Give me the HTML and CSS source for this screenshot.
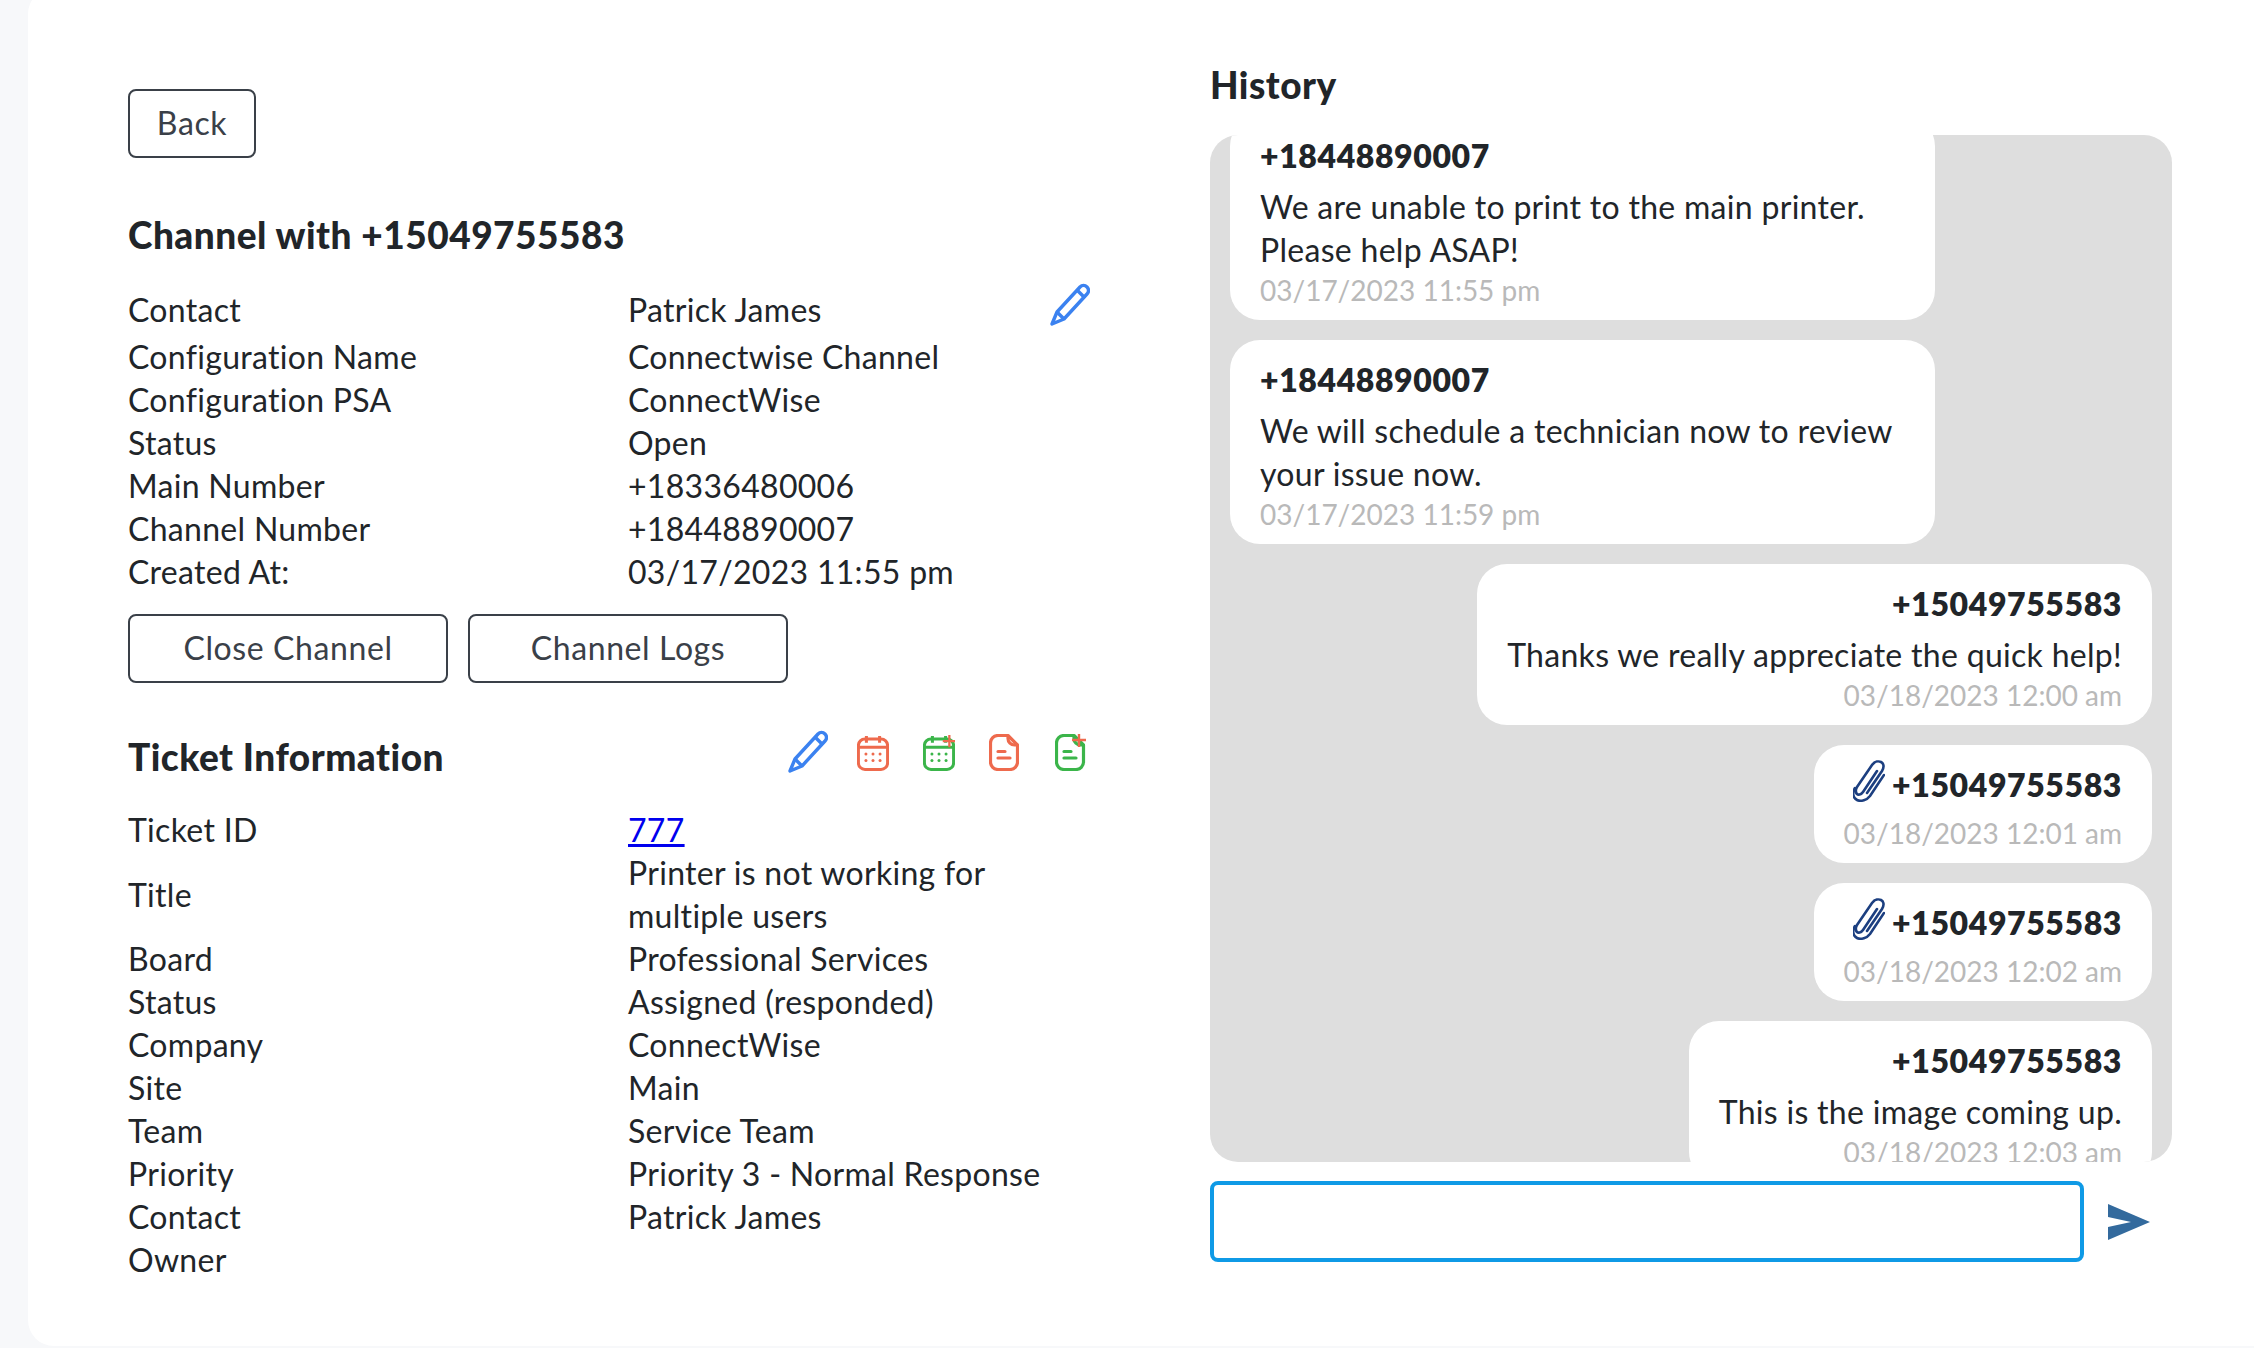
FILE: index.html
```html
<!DOCTYPE html>
<html lang="en">
<head>
<meta charset="utf-8">
<title>Channel</title>
<link rel="stylesheet" href="styles.css">
</head>
<body>
<main class="card">
  <section class="left">
    <button class="btn btn-back">Back</button>
    <h2 class="title channel-title">Channel with +15049755583</h2>
    <div class="rows">
      <div class="row row-contact"><span>Contact</span><span class="value-with-icon"><span>Patrick James</span>
        <svg class="ic-pencil" viewBox="0 0 40 44"><g fill="none" stroke="#3b82f0" stroke-width="3.400" stroke-linejoin="round"><path d="M7 29 30 4c2-2 5-2 7 0s2 5 0 7L14 36 2 41z"/><path d="M27 7l8 8M7 29l7 7"/></g></svg>
      </span></div>
      <div class="row"><span>Configuration Name</span><span>Connectwise Channel</span></div>
      <div class="row"><span>Configuration PSA</span><span>ConnectWise</span></div>
      <div class="row"><span>Status</span><span>Open</span></div>
      <div class="row"><span>Main Number</span><span>+18336480006</span></div>
      <div class="row"><span>Channel Number</span><span>+18448890007</span></div>
      <div class="row"><span>Created At:</span><span>03/17/2023 11:55 pm</span></div>
    </div>
    <div class="actions">
      <button class="btn btn-wide">Close Channel</button>
      <button class="btn btn-wide">Channel Logs</button>
    </div>
    <div class="ticket-head">
      <h2 class="title">Ticket Information</h2>
      <div class="icons">
        <svg class="ic-pencil" viewBox="0 0 40 44"><g fill="none" stroke="#3b82f0" stroke-width="3.400" stroke-linejoin="round"><path d="M7 29 30 4c2-2 5-2 7 0s2 5 0 7L14 36 2 41z"/><path d="M27 7l8 8M7 29l7 7"/></g></svg>
        <svg class="ic-cal" viewBox="0 0 34 38"><g fill="none" stroke="#ee6a4d" stroke-width="3.200"><rect x="1.500" y="4" width="31" height="32.500" rx="7"/><path d="M1.500 13h31M10 1v7M24 1v7"/></g><g fill="#ee6a4d"><circle cx="9.500" cy="20" r="1.600"/><circle cx="17" cy="20" r="1.600"/><circle cx="24.500" cy="20" r="1.600"/><circle cx="9.500" cy="27" r="1.600"/><circle cx="17" cy="27" r="1.600"/><circle cx="24.500" cy="27" r="1.600"/></g></svg>
        <svg class="ic-cal" viewBox="0 0 34 38"><g fill="none" stroke="#3bb54a" stroke-width="3.200"><rect x="1.500" y="4" width="31" height="32.500" rx="7"/><path d="M1.500 13h31M10 1v7M24 1v7"/></g><g fill="#3bb54a"><circle cx="9.500" cy="20" r="1.600"/><circle cx="17" cy="20" r="1.600"/><circle cx="24.500" cy="20" r="1.600"/><circle cx="9.500" cy="27" r="1.600"/><circle cx="17" cy="27" r="1.600"/><circle cx="24.500" cy="27" r="1.600"/></g><path d="M28 0v13M21 6.500h13" stroke="#ee6a4d" stroke-width="2.400"/></svg>
        <svg class="ic-doc" viewBox="0 0 30 37"><g fill="none" stroke="#ee6a4d" stroke-width="3.200" stroke-linejoin="round"><path d="M19 1.500H9a7.500 7.500 0 0 0-7.500 7.500v19A7.500 7.500 0 0 0 9 35.500h12a7.500 7.500 0 0 0 7.500-7.500V11z"/><path d="M19 1.500v3a6.500 6.500 0 0 0 6.500 6.500h3"/><path d="M9 17.500h7M9 24h12" stroke-linecap="round"/></g></svg>
        <svg class="ic-doc-plus" viewBox="0 0 32 37"><g fill="none" stroke="#3bb54a" stroke-width="3.200" stroke-linejoin="round"><path d="M19 1.500H9a7.500 7.500 0 0 0-7.500 7.500v19A7.500 7.500 0 0 0 9 35.500h12a7.500 7.500 0 0 0 7.500-7.500V11z"/><path d="M19 1.500v3a6.500 6.500 0 0 0 6.500 6.500h3"/><path d="M9 17.500h7M9 24h12" stroke-linecap="round"/></g><path d="M24 0v13M17 6h14" stroke="#ee6a4d" stroke-width="2.400" fill="none"/></svg>
      </div>
    </div>
    <div class="rows">
      <div class="row"><span>Ticket ID</span><span><a class="link" href="#">777</a></span></div>
      <div class="row"><span>Title</span><span>Printer is not working for multiple users</span></div>
      <div class="row"><span>Board</span><span>Professional Services</span></div>
      <div class="row"><span>Status</span><span>Assigned (responded)</span></div>
      <div class="row"><span>Company</span><span>ConnectWise</span></div>
      <div class="row"><span>Site</span><span>Main</span></div>
      <div class="row"><span>Team</span><span>Service Team</span></div>
      <div class="row"><span>Priority</span><span>Priority 3 - Normal Response</span></div>
      <div class="row"><span>Contact</span><span>Patrick James</span></div>
      <div class="row"><span>Owner</span><span></span></div>
    </div>
  </section>
  <section class="right">
    <h2 class="title history-title">History</h2>
    <div class="chat">
      <article class="bubble first">
        <div class="name">+18448890007</div>
        <p class="msg">We are unable to print to the main printer. Please help ASAP!</p>
        <div class="date">03/17/2023 11:55 pm</div>
      </article>
      <article class="bubble">
        <div class="name">+18448890007</div>
        <p class="msg">We will schedule a technician now to review your issue now.</p>
        <div class="date">03/17/2023 11:59 pm</div>
      </article>
      <article class="bubble mine">
        <div class="name">+15049755583</div>
        <p class="msg">Thanks we really appreciate the quick help!</p>
        <div class="date">03/18/2023 12:00 am</div>
      </article>
      <article class="bubble mine">
        <div class="name"><svg class="clip" viewBox="0 0 32 42"><path d="M24 11 10 32c-2 3-5 3-6 2s-2-4 0-7L19 5c3-4 7-4 9-3s4 4 1 9L14 33" fill="none" stroke="#1c3f80" stroke-width="2.600" stroke-linecap="round"/><path d="M31 15 17 36c-3 4-9 6-13 4s-5-7-2-12" fill="none" stroke="#1c3f80" stroke-width="2.600" stroke-linecap="round"/></svg>+15049755583</div>
        <div class="date">03/18/2023 12:01 am</div>
      </article>
      <article class="bubble mine">
        <div class="name"><svg class="clip" viewBox="0 0 32 42"><path d="M24 11 10 32c-2 3-5 3-6 2s-2-4 0-7L19 5c3-4 7-4 9-3s4 4 1 9L14 33" fill="none" stroke="#1c3f80" stroke-width="2.600" stroke-linecap="round"/><path d="M31 15 17 36c-3 4-9 6-13 4s-5-7-2-12" fill="none" stroke="#1c3f80" stroke-width="2.600" stroke-linecap="round"/></svg>+15049755583</div>
        <div class="date">03/18/2023 12:02 am</div>
      </article>
      <article class="bubble mine">
        <div class="name">+15049755583</div>
        <p class="msg">This is the image coming up.</p>
        <div class="date">03/18/2023 12:03 am</div>
      </article>
    </div>
    <div class="composer">
      <div class="input"></div>
      <svg class="send" viewBox="0 0 42 36"><path d="M0 0 42 18 0 36V23l23-5L0 13z" fill="#336a9d"/></svg>
    </div>
  </section>
</main>
</body>
</html>
```
FILE: styles.css
```css
* { box-sizing: border-box; }
html, body { margin: 0; height: 100%; overflow: hidden; }
body {
  background: #f7f8fa;
  color: #212529;
  font-family: "Lato", "Liberation Sans", sans-serif;
  font-size: 32px;
  letter-spacing: 0.3px;
  line-height: 43px;
}
.card {
  margin: -12px 0 0 28px;
  height: 1358px;
  background: #fff;
  border-radius: 26px 0 0 26px;
  padding: 72px 82px 0 100px;
  display: flex;
  gap: 120px;
}
.left { flex: 0 0 962px; padding-top: 29px; }
.right { flex: 0 0 962px; }
.title { margin: 0; font-size: 37px; letter-spacing: 0.5px; line-height: 50px; font-weight: 900; }
.btn {
  display: block;
  height: 69px;
  background: #fff;
  border: 2px solid #3a4048;
  border-radius: 8px;
  color: #3a4048;
  font: inherit;
  letter-spacing: 0.6px;
  line-height: 59px;
  padding: 0 0 2px;
}
.btn-back { width: 128px; }
.btn-wide { width: 320px; }
.channel-title { margin-top: 52px; }
.row {
  display: grid;
  grid-template-columns: 500px 462px;
  align-items: center;
}
.row-contact { margin-top: 23px; height: 52px; align-items: start; }
.row-contact > span:first-child { padding-top: 5px; }
.value-with-icon { display: flex; justify-content: space-between; padding-top: 5px; }
.ic-pencil { width: 40px; height: 44px; flex: none; margin-top: -5px; }
.actions { display: flex; gap: 20px; margin-top: 21px; }
.ticket-head { display: flex; justify-content: space-between; margin-top: 49px; height: 76px; }
.icons { display: flex; gap: 34px; align-items: flex-start; padding-right: 3px; padding-top: 2px; }
.ticket-head .ic-pencil { margin: -4px -5px 0 0; }
.ic-cal { width: 32px; height: 38px; flex: none; }
.ic-doc { width: 30px; height: 37px; flex: none; margin-right: 2px; }
.ic-doc-plus { width: 32px; height: 37px; flex: none; }
.link { color: #0000ee; text-decoration: underline; }
.history-title { height: 75px; }
.chat {
  height: 1027px;
  background: #dedede;
  border-radius: 28px;
  padding: 0 20px;
  overflow: hidden;
  display: flex;
  flex-direction: column;
  align-items: flex-start;
  gap: 20px;
}
.bubble {
  flex: none;
  max-width: 705px;
  background: #fff;
  border-radius: 30px;
  padding: 18px 30px 11px;
}
.bubble.first { margin-top: -19px; }
.bubble.mine { align-self: flex-end; text-align: right; }
.name { font-weight: 800; letter-spacing: 0.6px; margin-bottom: 8px; }
.msg { margin: 0; }
.date { color: #b9b9b9; font-size: 28px; letter-spacing: 0; line-height: 38px; }
.clip { width: 32px; height: 42px; margin: -16px 7px 0 0; vertical-align: middle; }
.composer { display: flex; align-items: center; gap: 24px; margin-top: 19px; }
.input {
  width: 874px;
  height: 81px;
  border: 4px solid #0f9ae6;
  border-radius: 8px;
  background: #fff;
}
.send { width: 42px; height: 36px; flex: none; }
```
